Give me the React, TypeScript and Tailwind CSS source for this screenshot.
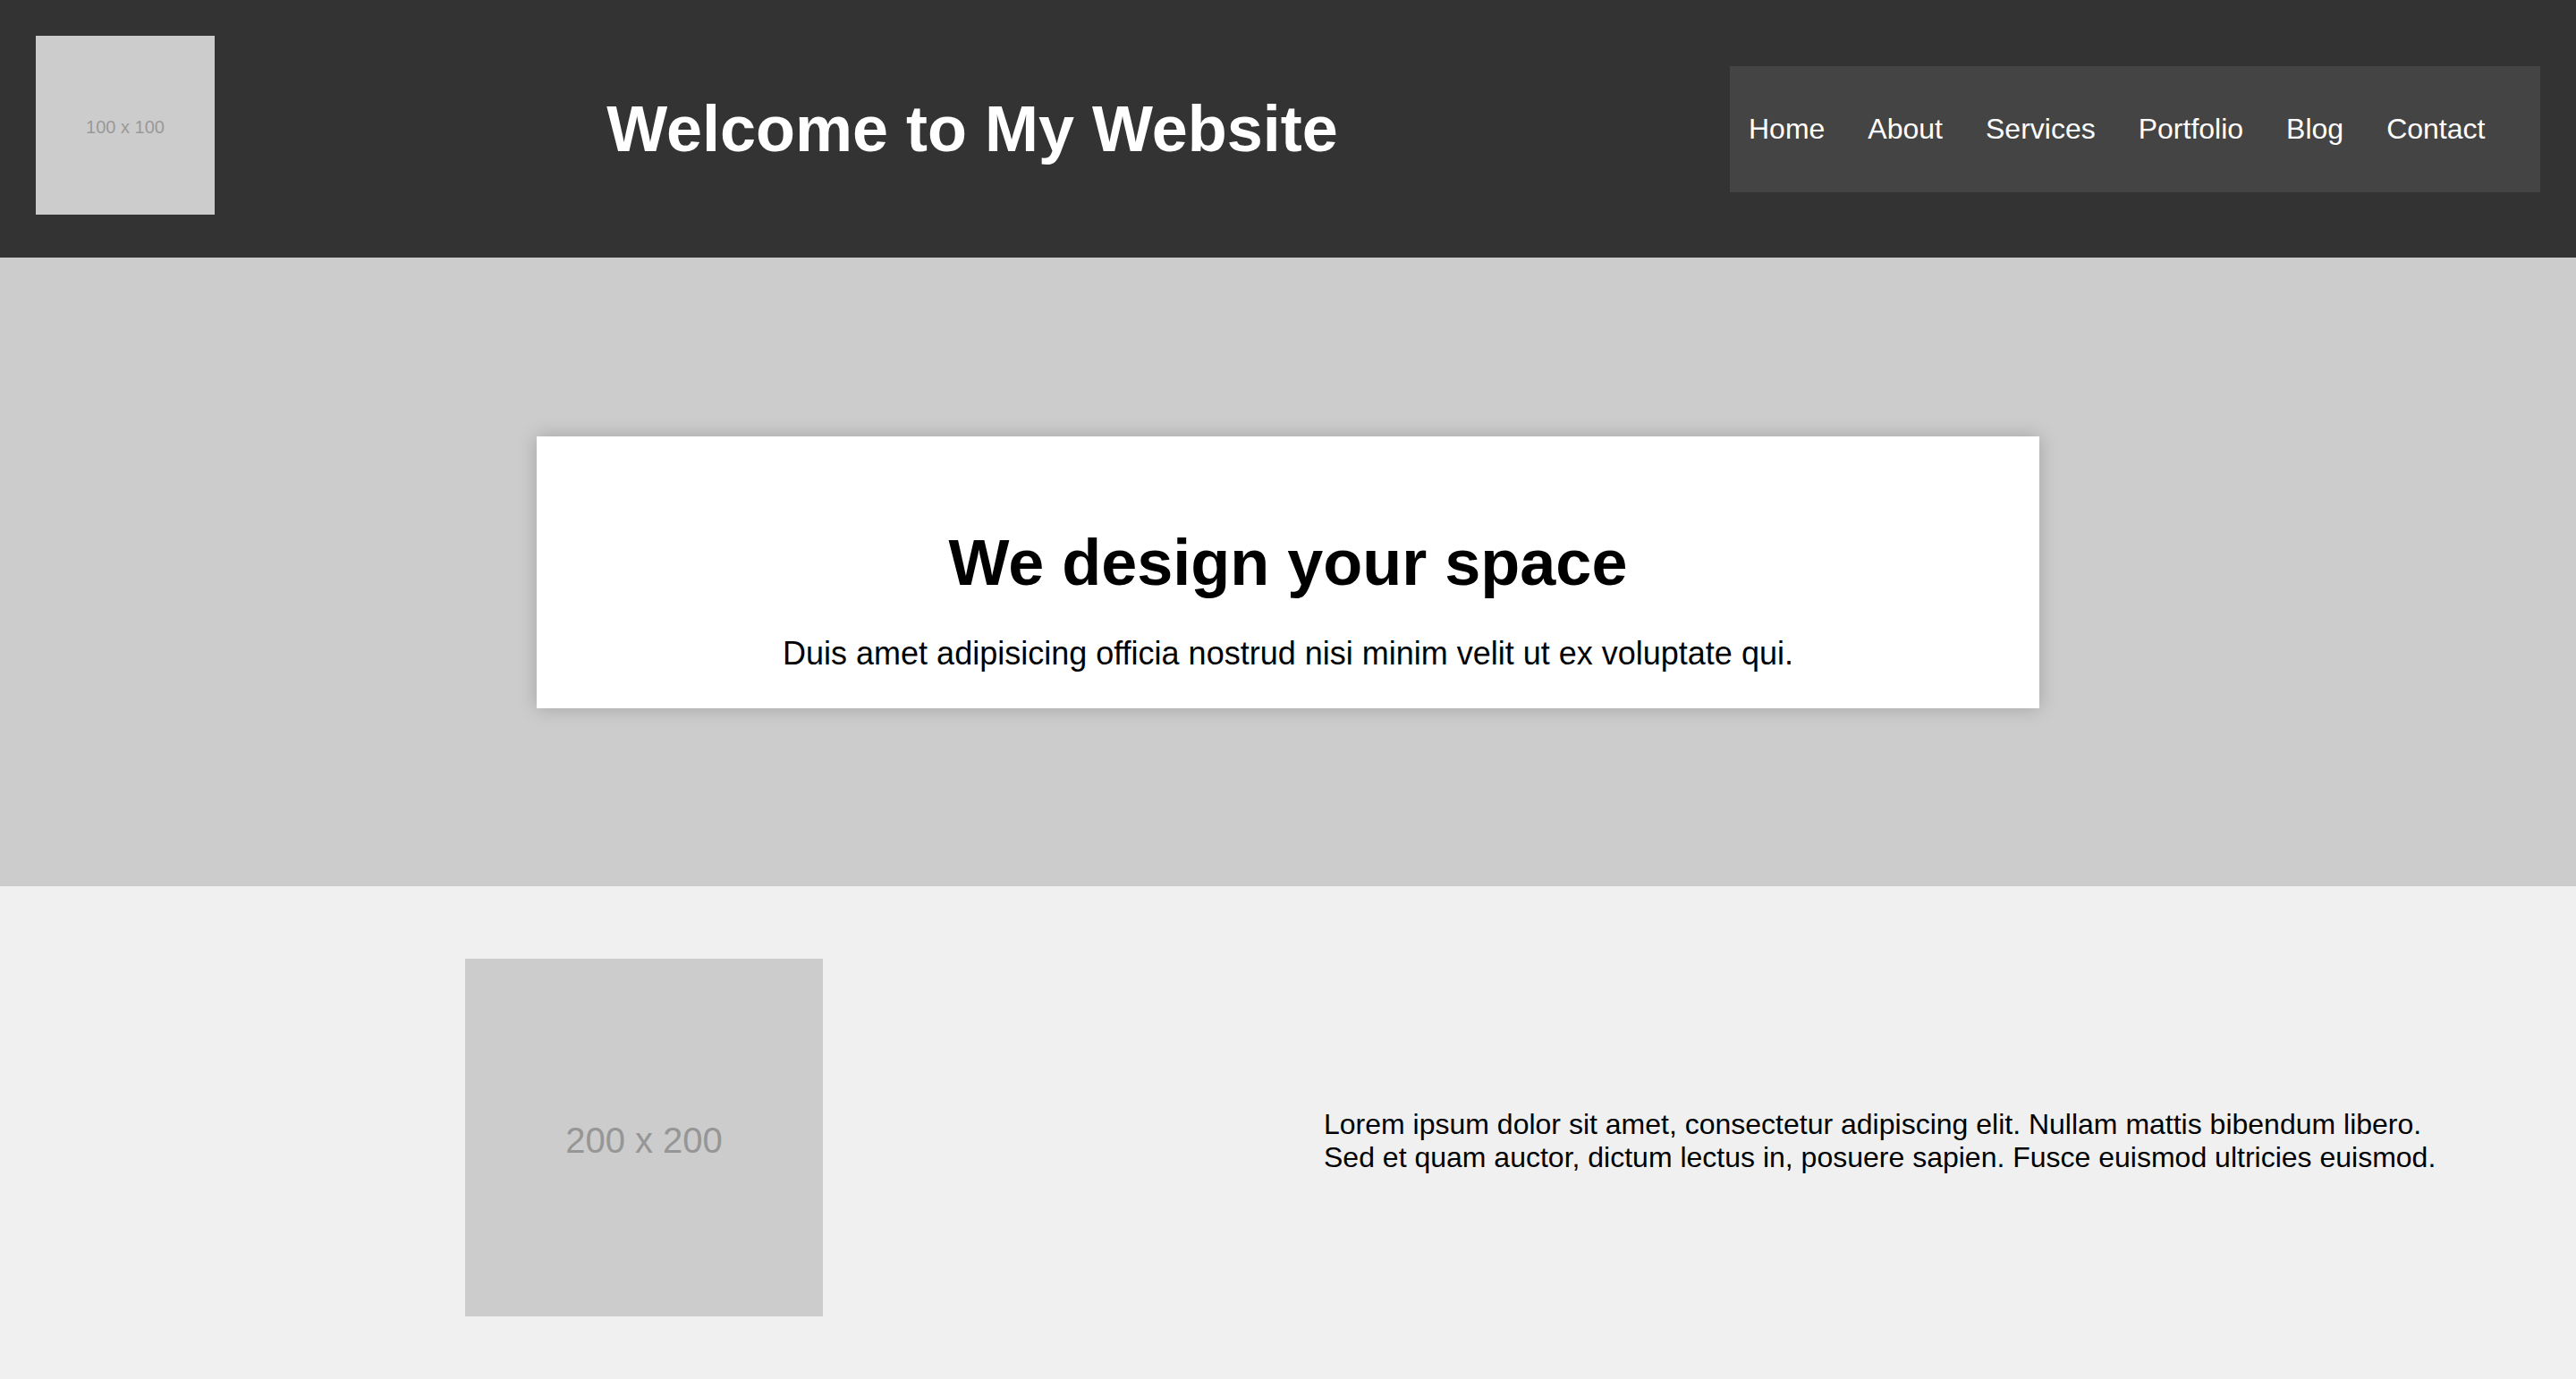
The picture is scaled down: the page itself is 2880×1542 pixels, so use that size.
import React from 'react';

const navItems = ['Home', 'About', 'Services', 'Portfolio', 'Blog', 'Contact'];

function Placeholder({ size, label }: { size: 'sm' | 'lg'; label: string }) {
    return (
        <div
            className={
                size === 'sm'
                    ? 'w-[200px] h-[200px] bg-[#cccccc] flex items-center justify-center pt-[3px] text-[20px] text-[#999999]'
                    : 'w-[400px] h-[400px] bg-[#cccccc] flex items-center justify-center pt-[6px] text-[40px] text-[#969696]'
            }
        >
            {label}
        </div>
    );
}

export default function App() {
    return (
        <div className="min-h-screen bg-[#f0f0f0] font-['Liberation_Sans',Arial,sans-serif]">
            {/* header */}
            <header className="bg-[#333333] flex items-center justify-between px-[40px] py-[40px]">
                <div className="pb-[8px]">
                    <Placeholder size="sm" label="100 x 100" />
                </div>
                <h1 className="text-white text-[72px] font-bold leading-[83px]">Welcome to My Website</h1>
                <nav className="bg-[#444444] w-[906px] h-[141px] flex items-center gap-[48px] pl-[21px]">
                    {navItems.map((item) => (
                        <a key={item} href="#" className="text-white text-[32px] leading-[37px]">
                            {item}
                        </a>
                    ))}
                </nav>
            </header>

            {/* hero */}
            <section className="bg-[#cccccc] h-[703px] flex items-center justify-center">
                <div className="w-[1680px] bg-white shadow-[0_0_20px_rgba(0,0,0,0.2)] pt-[100px] pb-[41px] text-center text-black">
                    <h2 className="text-[72px] font-bold leading-[83px]">We design your space</h2>
                    <p className="mt-[39px] text-[36px] leading-[41px]">
                        Duis amet adipisicing officia nostrud nisi minim velit ut ex voluptate qui.
                    </p>
                </div>
            </section>

            {/* about */}
            <section className="grid grid-cols-2 items-center py-[81px]">
                <div className="flex justify-center pb-[8px]">
                    <Placeholder size="lg" label="200 x 200" />
                </div>
                <div className="pl-[40px]">
                    <p className="w-[1260px] text-[32px] leading-[36.8px] text-black">
                        Lorem ipsum dolor sit amet, consectetur adipiscing elit. Nullam mattis bibendum libero.
                        Sed et quam auctor, dictum lectus in, posuere sapien. Fusce euismod ultricies euismod.
                    </p>
                </div>
            </section>
        </div>
    );
}
